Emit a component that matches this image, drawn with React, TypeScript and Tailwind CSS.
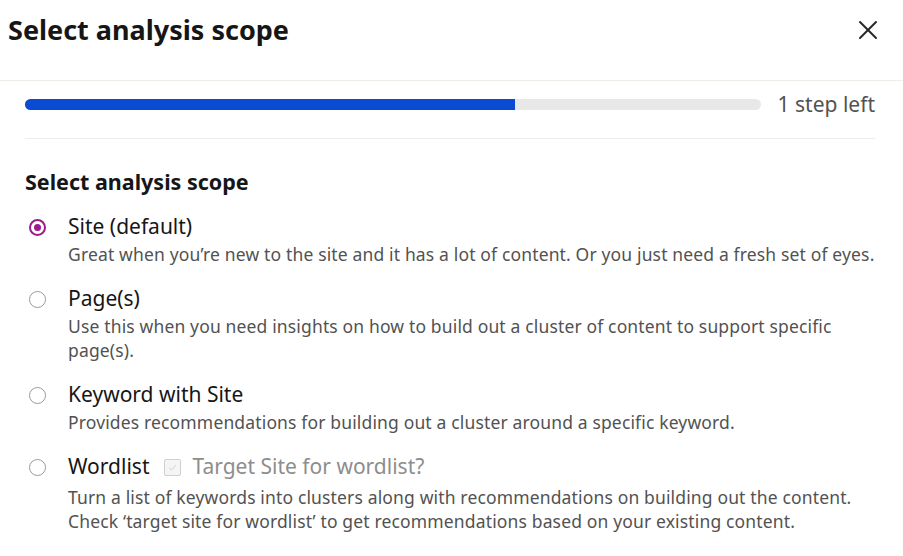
import { X } from 'lucide-react'

interface ScopeOption {
  label: string
  description: string[]
  checked?: boolean
  extra?: boolean
}

const OPTIONS: ScopeOption[] = [
  {
    label: 'Site (default)',
    description: ['Great when you’re new to the site and it has a lot of content. Or you just need a fresh set of eyes.'],
    checked: true,
  },
  {
    label: 'Page(s)',
    description: ['Use this when you need insights on how to build out a cluster of content to support specific', 'page(s).'],
  },
  {
    label: 'Keyword with Site',
    description: ['Provides recommendations for building out a cluster around a specific keyword.'],
  },
  {
    label: 'Wordlist',
    description: [
      'Turn a list of keywords into clusters along with recommendations on building out the content.',
      'Check ‘target site for wordlist’ to get recommendations based on your existing content.',
    ],
    extra: true,
  },
]

function Radio({ checked }: { checked?: boolean }) {
  return checked ? (
    <span className="flex h-[17px] w-[17px] items-center justify-center rounded-full border-2 border-[#9b1b8e]">
      <span className="h-[7px] w-[7px] rounded-full bg-[#9b1b8e]" />
    </span>
  ) : (
    <span className="h-[17px] w-[17px] rounded-full border border-[#9a9a9a]" />
  )
}

function Option({ label, description, checked, extra }: ScopeOption) {
  return (
    <div className="flex flex-col">
      <div className="flex h-[30px] items-center">
        <div className="flex w-[43px] shrink-0 pl-[4px]">
          <Radio checked={checked} />
        </div>
        <span className="text-[21px] text-[#161616]">{label}</span>
        {extra && (
          <span className="ml-[15px] flex items-center gap-[11px]">
            {/* disabled checkbox, faint tick */}
            <span className="flex h-[17px] w-[17px] items-center justify-center rounded-[2px] border border-[#cfcfcf] bg-[#f5f5f5]">
              <svg viewBox="0 0 12 12" className="h-[11px] w-[11px]">
                <path d="M2.5 6.2 5 8.6 9.6 3.4" fill="none" stroke="#dcdcdc" strokeWidth="1.4" />
              </svg>
            </span>
            <span className="text-[21px] text-[#8d8d8d]">Target Site for wordlist?</span>
          </span>
        )}
      </div>
      <div
        className={`pl-[43px] text-[17.5px] leading-[24px] tracking-[0.15px] text-[#525252] ${extra ? 'mt-[3px]' : ''}`}
      >
        {description.map((line) => (
          <p key={line}>{line}</p>
        ))}
      </div>
    </div>
  )
}

export default function App() {
  return (
    <div
      className="h-[556px] w-[903px] overflow-hidden bg-white"
      style={{ fontFamily: '"Noto Sans", "Liberation Sans", sans-serif' }}
    >
      {/* Header */}
      <div className="h-[81px] border-b border-[#f0ece8]">
        <div className="flex h-[60px] items-center justify-between pl-[8px] pr-[19px]">
          <h1 className="text-[27px] font-bold text-[#161616]">Select analysis scope</h1>
          <X size={32} className="text-[#262626]" strokeWidth={1.5} />
        </div>
      </div>

      <div className="pl-[25px] pr-[28px]">
        {/* Progress */}
        <div className="flex h-[58px] items-center gap-[17px] border-b border-[#f0ece8] pb-[10px]">
          <div className="relative h-[11px] flex-1 rounded-full bg-[#e8e8e8]">
            <div className="absolute inset-y-0 left-0 w-[490px] rounded-l-full bg-[#0a4bd3]" />
          </div>
          <span className="text-[21px] text-[#525252]">1 step left</span>
        </div>

        {/* Scope */}
        <h2 className="mt-[28px] text-[21.5px] font-bold leading-[30px] text-[#161616]">Select analysis scope</h2>
        <div className="mt-[15px] flex flex-col gap-[18px]">
          {OPTIONS.map((o) => (
            <Option key={o.label} {...o} />
          ))}
        </div>
      </div>
    </div>
  )
}
